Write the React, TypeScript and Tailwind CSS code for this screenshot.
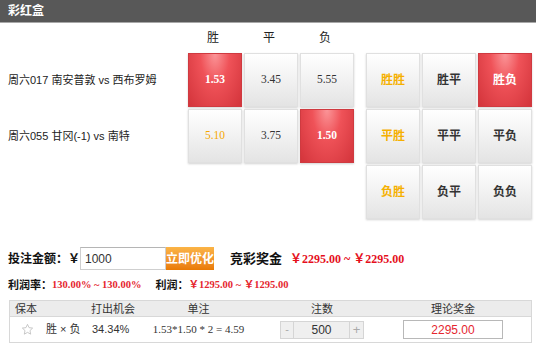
import React from "react";

const SANS = "font-[family-name:'Liberation_Sans','Noto_Sans_CJK_SC',sans-serif]";
const SERIF = "font-[family-name:'Liberation_Serif','Noto_Sans_CJK_SC',serif]";

const cellBase =
  "w-[54px] h-[54px] flex items-center justify-center border shadow-[0_1px_2px_rgba(0,0,0,0.18)]";
const gray = "bg-linear-to-b from-white to-[#e4e4e4] border-[#e0e0e0]";
const red =
  "bg-[radial-gradient(ellipse_at_50%_0%,#fb9598_0%,#ef5258_40%,#d3343b_100%)] border-[#cf3a40]";

type Cell = { v: string; kind: "gray" | "red" | "orange" };

const odds: { label: string; cells: Cell[] }[] = [
  {
    label: "周六017 南安普敦 vs 西布罗姆",
    cells: [
      { v: "1.53", kind: "red" },
      { v: "3.45", kind: "gray" },
      { v: "5.55", kind: "gray" },
    ],
  },
  {
    label: "周六055 甘冈(-1) vs 南特",
    cells: [
      { v: "5.10", kind: "orange" },
      { v: "3.75", kind: "gray" },
      { v: "1.50", kind: "red" },
    ],
  },
];

const combos: Cell[] = [
  { v: "胜胜", kind: "orange" },
  { v: "胜平", kind: "gray" },
  { v: "胜负", kind: "red" },
  { v: "平胜", kind: "orange" },
  { v: "平平", kind: "gray" },
  { v: "平负", kind: "gray" },
  { v: "负胜", kind: "orange" },
  { v: "负平", kind: "gray" },
  { v: "负负", kind: "gray" },
];

function OddCell({ c }: { c: Cell }) {
  const isRed = c.kind === "red";
  return (
    <div className={`${cellBase} ${isRed ? red : gray}`}>
      <span
        className={`${SERIF} text-[11.5px] ${
          isRed ? "text-white font-bold" : c.kind === "orange" ? "text-[#f5a800]" : "text-[#333]"
        }`}
      >
        {c.v}
      </span>
    </div>
  );
}

function ComboCell({ c }: { c: Cell }) {
  const isRed = c.kind === "red";
  return (
    <div className={`${cellBase} ${isRed ? red : gray}`}>
      <span
        className={`text-[12px] font-bold ${
          isRed ? "text-white" : c.kind === "orange" ? "text-[#f5b000]" : "text-[#333]"
        }`}
      >
        {c.v}
      </span>
    </div>
  );
}

function StarIcon() {
  return (
    <svg width="13" height="13" viewBox="0 0 24 24" fill="none" stroke="#bdbdbd" strokeWidth="1.5">
      <path d="M12 2.5l2.9 6.1 6.6.8-4.9 4.6 1.3 6.6L12 17.3l-5.9 3.3 1.3-6.6-4.9-4.6 6.6-.8z" />
    </svg>
  );
}

export default function App() {
  return (
    <div className={`w-[536px] h-[346px] bg-white overflow-hidden text-[#333] ${SANS}`}>
      <div className="h-[23px] bg-[#585858] border-b border-[#a8a8a8] flex items-center pl-[8px] text-white font-bold text-[12px]">
        彩红盒
      </div>

      <div className="flex">
        <div className="w-[354px]">
          <div className="h-[30px] flex items-center pl-[188px] gap-[2px] text-[12px] text-[#222]">
            <div className="w-[54px] text-center pr-[4px]">胜</div>
            <div className="w-[54px] text-center pr-[4px]">平</div>
            <div className="w-[54px] text-center pr-[4px]">负</div>
          </div>
          <div className="flex flex-col gap-[2px]">
            {odds.map((r) => (
              <div key={r.label} className="flex h-[54px]">
                <div className="w-[188px] pl-[8px] flex items-center text-[11px] text-[#222]">
                  {r.label}
                </div>
                <div className="flex gap-[2px]">
                  {r.cells.map((c, i) => (
                    <OddCell key={i} c={c} />
                  ))}
                </div>
              </div>
            ))}
          </div>
        </div>

        <div className="ml-[12px] mt-[30px] grid grid-cols-[repeat(3,54px)] gap-[2px]">
          {combos.map((c) => (
            <ComboCell key={c.v} c={c} />
          ))}
        </div>
      </div>

      <div className="mt-[28px] h-[23px] flex items-center pl-[8px]">
        <span className="text-[12px] font-bold text-[#111] w-[72px]">投注金额：￥</span>
        <div className="w-[86px] h-[23px] border border-[#cfcfcf] border-t-[#b5b5b5] flex items-center pl-[4px] text-[12px] text-[#333] bg-white">
          1000
        </div>
        <div className="w-[48px] h-[23px] bg-linear-to-b from-[#fbb446] to-[#e97a02] flex items-center justify-center text-white font-bold text-[12px]">
          立即优化
        </div>
        <span className="ml-[16px] text-[13px] font-bold text-[#111]">竞彩奖金</span>
        <span className={`ml-[8px] text-[12px] font-bold text-[#e50f1c] ${SERIF}`}>
          ￥2295.00 ~ ￥2295.00
        </span>
      </div>

      <div className="mt-[7px] h-[16px] flex items-center pl-[8px] text-[11px] font-bold">
        <span className="text-[#111]">利润率：</span>
        <span className={`text-[10.5px] text-[#e5262f] ${SERIF}`}>130.00% ~ 130.00%</span>
        <span className="ml-[14px] text-[#111]">利润：</span>
        <span className={`text-[10.5px] text-[#e5262f] ${SERIF}`}>￥1295.00 ~ ￥1295.00</span>
      </div>

      <div className="mt-[7px] ml-[9px] w-[523px] border border-[#d8d8d8] text-[11px] text-[#333]">
        <div className="grid grid-cols-[31px_46px_64px_95px_152px_110px_1fr] h-[16px] bg-[#ececec] border-b border-[#d8d8d8] items-center">
          <div className="pl-[5px]">保本</div>
          <div />
          <div className="pl-[4px]">打出机会</div>
          <div className="text-center">单注</div>
          <div className="text-center">注数</div>
          <div className="text-center">理论奖金</div>
          <div />
        </div>
        <div className="grid grid-cols-[31px_46px_64px_95px_152px_110px_1fr] h-[25px] items-center bg-white">
          <div className="pl-[11px] flex items-center">
            <StarIcon />
          </div>
          <div className="pl-[5px] text-[11px]">胜 × 负</div>
          <div className="pl-[5px]">34.34%</div>
          <div className={`text-center text-[11px] ${SERIF}`}>1.53*1.50 * 2 = 4.59</div>
          <div className="flex justify-center">
            <div className="flex h-[18px] border border-[#d5d5d5] bg-[#efefef]">
              <div className="w-[13px] border-r border-[#d5d5d5] flex items-center justify-center text-[#aaa]">
                -
              </div>
              <div className="w-[55px] flex items-center justify-center text-[12px] text-[#333]">
                500
              </div>
              <div className="w-[14px] border-l border-[#d5d5d5] flex items-center justify-center text-[#aaa] text-[13px]">
                +
              </div>
            </div>
          </div>
          <div className="flex justify-center">
            <div className="w-[100px] h-[19px] border border-[#b8b8b8] bg-white flex items-center justify-center text-[12px] text-[#e5262f]">
              2295.00
            </div>
          </div>
          <div />
        </div>
      </div>
    </div>
  );
}
